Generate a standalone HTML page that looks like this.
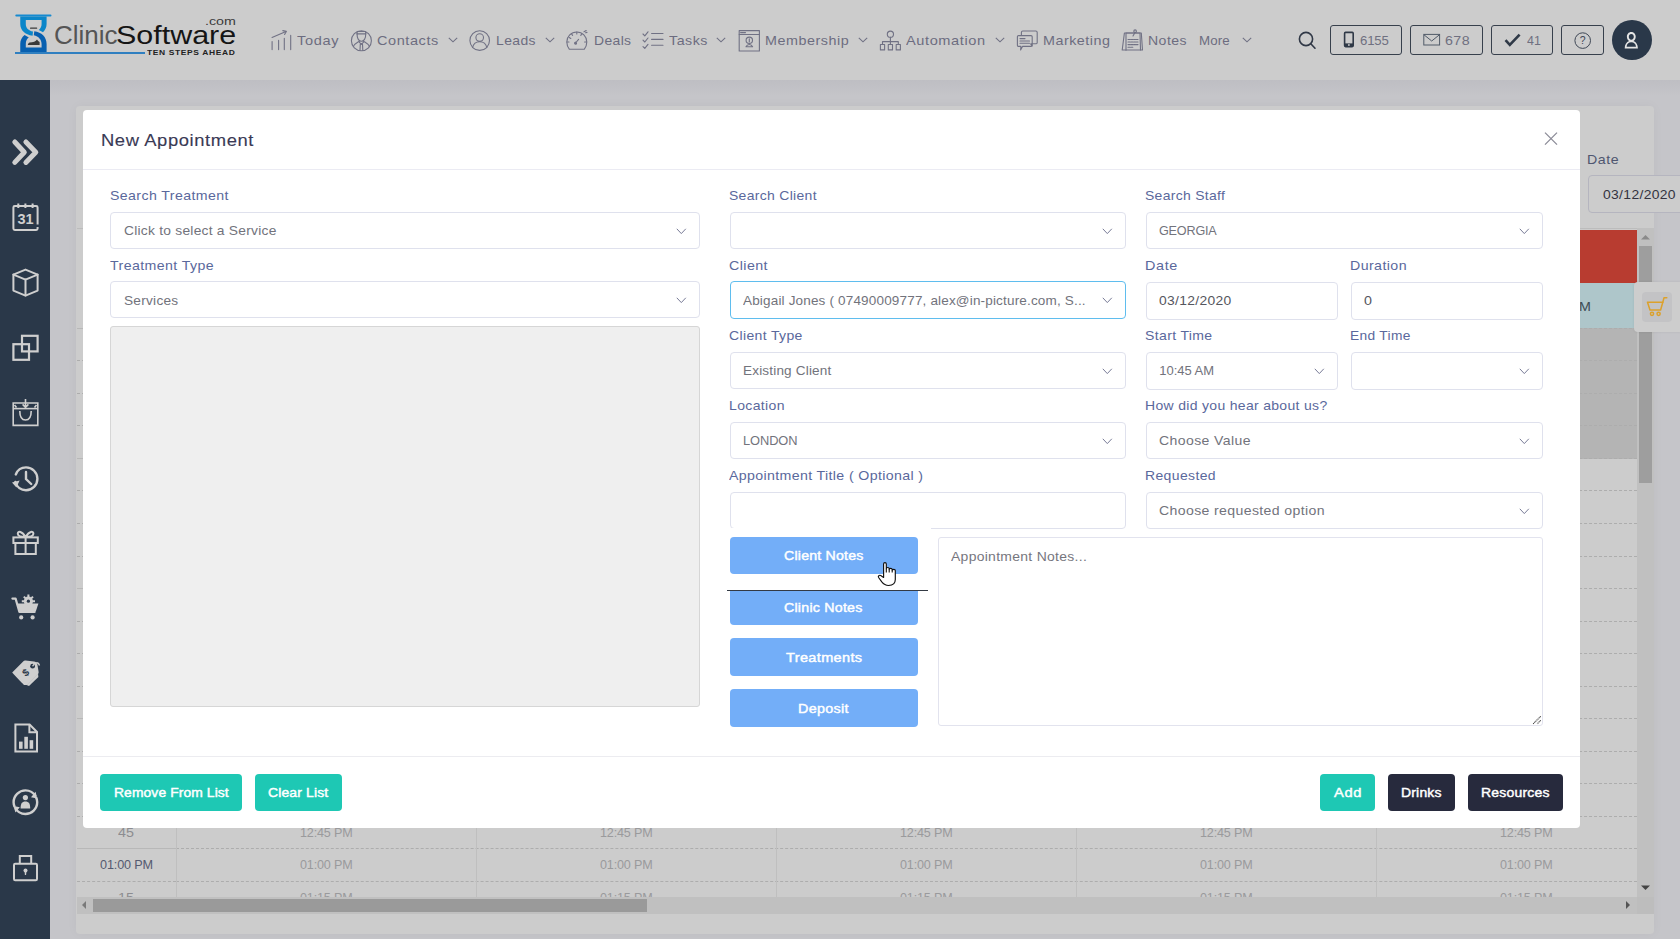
<!DOCTYPE html>
<html><head><meta charset="utf-8">
<style>
*{box-sizing:border-box;margin:0;padding:0}
html,body{width:1680px;height:939px;overflow:hidden;background:#c5c5c9;font-family:"Liberation Sans",sans-serif;position:relative}
.a{position:absolute}
.tx{white-space:pre}
svg{overflow:visible}
</style></head><body>
<div class="a" style="left:0;top:0;width:1680px;height:80px;background:#cccccc"></div>
<div class="a" style="left:0;top:80px;width:50px;height:859px;background:#2a3849"></div>
<div class="a" style="left:50px;top:80px;width:1630px;height:16px;background:linear-gradient(#bebec3,#c5c5c9)"></div>
<div class="a" style="left:76px;top:106px;width:1578px;height:828px;background:#cccccc;border-radius:4px;box-shadow:0 0 12px rgba(0,0,0,.035)"></div>
<svg class="a" style="left:0px;top:0px;" width="60" height="60" viewBox="0 0 60 60">
<rect x="15.3" y="14.6" width="36.2" height="2" rx="1" fill="#168ad0"/>
<path d="M20.25 16.6 L46.6 16.6 L46.6 24 C46.6 27.5 45.2 30 43 32.3 L38.8 30 C40.6 28.4 41.6 26.4 41.6 24 L41.6 19.9 L25.8 19.9 L25.8 24 C25.8 28 28.5 30.6 33 31.6 L32.6 35.7 C25 34.6 20.25 30.2 20.25 24 Z" fill="#0b86c9"/>
<path d="M20.25 52.3 L46.6 52.3 L46.6 44 C46.6 37 41.5 32.2 34.3 31.3 L33.8 35.3 C38.6 36.3 41.6 39.8 41.6 44 L41.6 47.6 L25.8 47.6 L25.8 44 C25.8 41 27 38.8 28.8 37.6 L24.6 35.1 C21.8 37.4 20.25 40.4 20.25 44 Z" fill="#0860b0"/>
<rect x="30" y="27.4" width="7.2" height="1.4" rx=".6" fill="#3a3a3a"/>
<path d="M27.8 45 L39.6 45 L39.6 42 C38.5 41.5 37.6 40.6 37 39.4 C36 41.5 33 42.3 29.5 42.6 C28.6 43 28 43.8 27.8 45 Z" fill="#3a3a3a"/>
</svg>
<div class="a" style="left:15px;top:52px;width:130px;height:1.8px;background:#2f7fc0"></div>
<div id="t1" class="a tx" style="left:53.94px;top:21.74px;font-size:26.00px;line-height:26.00px;color:#555555;font-weight:normal;letter-spacing:0.000px;">Clinic</div>
<div id="t2" class="a tx" style="left:116.17px;top:21.74px;font-size:26.00px;line-height:26.00px;color:#151515;font-weight:normal;letter-spacing:0.000px;transform:scaleX(1.1707);transform-origin:0 0;">Software</div>
<div id="t3" class="a tx" style="left:204.65px;top:16.19px;font-size:11.00px;line-height:11.00px;color:#3a3a3a;font-weight:normal;letter-spacing:0.000px;transform:scaleX(1.2926);transform-origin:0 0;">.com</div>
<div id="t4" class="a tx" style="left:147.49px;top:49.07px;font-size:7.00px;line-height:7.00px;color:#222;font-weight:bold;letter-spacing:0.530px;transform:scaleX(1.2048);transform-origin:0 0;">TEN STEPS AHEAD</div>
<div id="t5" class="a tx" style="left:297.13px;top:33.60px;font-size:13.00px;line-height:13.00px;color:#6c6c80;font-weight:normal;letter-spacing:0.613px;transform:scaleX(1.1186);transform-origin:0 0;">Today</div>
<div id="t6" class="a tx" style="left:376.73px;top:33.60px;font-size:13.00px;line-height:13.00px;color:#6c6c80;font-weight:normal;letter-spacing:0.509px;transform:scaleX(1.1163);transform-origin:0 0;">Contacts</div>
<div id="t7" class="a tx" style="left:495.67px;top:33.60px;font-size:13.00px;line-height:13.00px;color:#6c6c80;font-weight:normal;letter-spacing:0.387px;transform:scaleX(1.0701);transform-origin:0 0;">Leads</div>
<div id="t8" class="a tx" style="left:593.67px;top:33.60px;font-size:13.00px;line-height:13.00px;color:#6c6c80;font-weight:normal;letter-spacing:0.356px;transform:scaleX(1.0688);transform-origin:0 0;">Deals</div>
<div id="t9" class="a tx" style="left:668.65px;top:33.60px;font-size:13.00px;line-height:13.00px;color:#6c6c80;font-weight:normal;letter-spacing:0.478px;transform:scaleX(1.0943);transform-origin:0 0;">Tasks</div>
<div id="t10" class="a tx" style="left:764.64px;top:33.60px;font-size:13.00px;line-height:13.00px;color:#6c6c80;font-weight:normal;letter-spacing:0.493px;transform:scaleX(1.1026);transform-origin:0 0;">Membership</div>
<div id="t11" class="a tx" style="left:905.93px;top:33.60px;font-size:13.00px;line-height:13.00px;color:#6c6c80;font-weight:normal;letter-spacing:0.527px;transform:scaleX(1.1213);transform-origin:0 0;">Automation</div>
<div id="t12" class="a tx" style="left:1043.14px;top:33.60px;font-size:13.00px;line-height:13.00px;color:#6c6c80;font-weight:normal;letter-spacing:0.448px;transform:scaleX(1.1039);transform-origin:0 0;">Marketing</div>
<div id="t13" class="a tx" style="left:1148.16px;top:33.60px;font-size:13.00px;line-height:13.00px;color:#6c6c80;font-weight:normal;letter-spacing:0.425px;transform:scaleX(1.0811);transform-origin:0 0;">Notes</div>
<div id="t14" class="a tx" style="left:1198.60px;top:33.60px;font-size:13.00px;line-height:13.00px;color:#6c6c80;font-weight:normal;letter-spacing:0.148px;transform:scaleX(1.0230);transform-origin:0 0;">More</div>
<svg class="a" style="left:447.5px;top:37px;" width="10" height="6" viewBox="0 0 10 6"><path d="M.8 .8 L5 4.8 L9.2 .8" fill="none" stroke="#707184" stroke-width="1.1"/></svg>
<svg class="a" style="left:544.5px;top:37px;" width="10" height="6" viewBox="0 0 10 6"><path d="M.8 .8 L5 4.8 L9.2 .8" fill="none" stroke="#707184" stroke-width="1.1"/></svg>
<svg class="a" style="left:716.2px;top:37px;" width="10" height="6" viewBox="0 0 10 6"><path d="M.8 .8 L5 4.8 L9.2 .8" fill="none" stroke="#707184" stroke-width="1.1"/></svg>
<svg class="a" style="left:857.5px;top:37px;" width="10" height="6" viewBox="0 0 10 6"><path d="M.8 .8 L5 4.8 L9.2 .8" fill="none" stroke="#707184" stroke-width="1.1"/></svg>
<svg class="a" style="left:994.5px;top:37px;" width="10" height="6" viewBox="0 0 10 6"><path d="M.8 .8 L5 4.8 L9.2 .8" fill="none" stroke="#707184" stroke-width="1.1"/></svg>
<svg class="a" style="left:1241.8px;top:37px;" width="10" height="6" viewBox="0 0 10 6"><path d="M.8 .8 L5 4.8 L9.2 .8" fill="none" stroke="#707184" stroke-width="1.1"/></svg>
<svg class="a" style="left:268px;top:28px;" width="26" height="24" viewBox="0 0 26 24"><g fill="none" stroke="#707184" stroke-width="1.1" stroke-linecap="round" stroke-linejoin="round"><path d="M4.1 13.5 V21.6 M10.6 12.4 V21.6 M16.3 10.2 V21.6 M22.7 7.4 V21.6"/><path d="M4 9.4 L18 3.6"/><path d="M14.8 2.6 L18.3 3.4 L16.6 6.4"/></g></svg>
<svg class="a" style="left:350px;top:29px;" width="24" height="24" viewBox="0 0 24 24"><g fill="none" stroke="#707184" stroke-width="1.1" stroke-linecap="round" stroke-linejoin="round"><circle cx="11.4" cy="11.7" r="10"/><path d="M7.3 2.5 H15.5 L15.9 4.9 H6.9 Z"/><path d="M7.1 4.9 C6.9 9.6 9 12.3 11.4 12.3 C13.8 12.3 15.9 9.6 15.7 4.9"/><path d="M9.6 12 C7.6 13.4 4.6 14.2 3.4 17.6 M13.2 12 C15.2 13.4 18.2 14.2 19.4 17.6"/><path d="M9.4 13.4 L11.4 15.1 L13.4 13.4"/><path d="M10.3 15.1 H12.5 L12.8 21.2 M10.3 15.1 L10 21.2"/></g></svg>
<svg class="a" style="left:469px;top:29px;" width="24" height="24" viewBox="0 0 24 24"><g fill="none" stroke="#707184" stroke-width="1.1" stroke-linecap="round" stroke-linejoin="round"><circle cx="10.7" cy="11.6" r="9.8"/><circle cx="10.7" cy="8.6" r="3.8"/><path d="M3.6 18.5 C4.5 14.5 7.5 12.8 10.7 12.8 C13.9 12.8 16.9 14.5 17.8 18.5"/></g></svg>
<svg class="a" style="left:566px;top:29px;" width="24" height="24" viewBox="0 0 24 24"><g fill="none" stroke="#707184" stroke-width="1.1" stroke-linecap="round" stroke-linejoin="round"><path d="M3.4 20.3 H18.2 C20.2 17.8 20.8 15.3 20.8 13 C20.8 7.5 16.4 3 10.8 3 C5.2 3 .8 7.5 .8 13 C.8 15.3 1.4 17.8 3.4 20.3 Z"/><path d="M10.8 3 V5 M3.2 8.5 L4.8 9.4 M1.2 13 H3 M18.6 13 H20.4 M5.6 5 L6.6 6.4 M15.5 5.2 L14.8 6.4"/><path d="M9.5 14 L12.6 10.3 M10.3 13.5 a1 1 0 1 1 -.1 -.1"/><path d="M18 2.8 L20.2 1.5 M19.6 3.8 L21 3.4"/></g></svg>
<svg class="a" style="left:641px;top:29px;" width="26" height="24" viewBox="0 0 26 24"><g fill="none" stroke="#707184" stroke-width="1.1" stroke-linecap="round" stroke-linejoin="round"><path d="M2 5 L3.8 6.8 L7 2.8 M2 11.2 L3.8 13 L7 9 M2 17.6 L3.8 19.4 L7 15.4"/><path d="M10.6 4.5 H22 M10.6 10.4 H22 M10.6 16.2 H22"/></g></svg>
<svg class="a" style="left:738px;top:29px;" width="24" height="24" viewBox="0 0 24 24"><g fill="none" stroke="#707184" stroke-width="1.1" stroke-linecap="round" stroke-linejoin="round"><rect x="1.2" y="1.6" width="20.2" height="20.4"/><path d="M1.2 5.5 H21.4"/><path d="M2.6 3.6 H7.5" stroke-dasharray="1 .6"/><circle cx="11.3" cy="11.3" r="3.2"/><path d="M11.3 9.8 V13 M8 17.8 C8.6 16.4 9.8 15.5 11.3 15.5 C12.8 15.5 14 16.4 14.6 17.8 Z"/></g></svg>
<svg class="a" style="left:879px;top:29px;" width="24" height="24" viewBox="0 0 24 24"><g fill="none" stroke="#707184" stroke-width="1.1" stroke-linecap="round" stroke-linejoin="round"><circle cx="11.4" cy="5.2" r="3.1"/><path d="M11.4 8.3 V12.6 M3.5 12.6 H19.3 M3.5 12.6 V15.5 M11.4 12.6 V15.5 M19.3 12.6 V15.5"/><rect x="1.4" y="15.5" width="4.2" height="5.4"/><rect x="9.3" y="15.5" width="4.2" height="5.4"/><rect x="17.2" y="15.5" width="4.2" height="5.4"/></g></svg>
<svg class="a" style="left:1016px;top:29px;" width="24" height="24" viewBox="0 0 24 24"><g fill="none" stroke="#707184" stroke-width="1.1" stroke-linecap="round" stroke-linejoin="round"><path d="M5.4 6.5 V3.4 C5.4 2.6 6 2 6.8 2 H19.8 C20.6 2 21.2 2.6 21.2 3.4 V13.4 C21.2 14.2 20.6 14.8 19.8 14.8 H15.3 L16 17 L14.7 14.9"/><path d="M2.6 6.6 H15 C15.7 6.6 16.2 7.1 16.2 7.8 V16.2 C16.2 16.9 15.7 17.4 15 17.4 H6.5 L4.6 21 L4.9 17.4 H2.6 C1.9 17.4 1.4 16.9 1.4 16.2 V7.8 C1.4 7.1 1.9 6.6 2.6 6.6 Z"/><path d="M4 9.6 H9 M4 12 H13.5 M4 14.2 H13.5"/></g></svg>
<svg class="a" style="left:1121px;top:29px;" width="24" height="24" viewBox="0 0 24 24"><g fill="none" stroke="#707184" stroke-width="1.1" stroke-linecap="round" stroke-linejoin="round"><path d="M1.2 21 L3.4 4 H20.3 L21.5 21 Z"/><path d="M5 21.3 V4 L19 4 L19.5 21"/><circle cx="14.1" cy="2.2" r="1.3"/><path d="M14 3.4 L12 7"/><path d="M7 10.5 H17 M7 13 H17 M7 15.6 H17 M7 18.3 H12" stroke-dasharray="2 .8"/></g></svg>
<svg class="a" style="left:1296px;top:29px;" width="24" height="22" viewBox="0 0 24 22"><g fill="none" stroke="#303846" stroke-width="1.6"><circle cx="10" cy="10" r="6.6"/><path d="M14.8 14.8 L19 19.2" stroke-linecap="round"/></g></svg>
<div class="a" style="left:1330.0px;top:25px;width:72.0px;height:29.5px;border:1px solid #37404c;border-radius:3px"></div>
<div class="a" style="left:1410.0px;top:25px;width:72.5px;height:29.5px;border:1px solid #37404c;border-radius:3px"></div>
<div class="a" style="left:1491.0px;top:25px;width:61.5px;height:29.5px;border:1px solid #37404c;border-radius:3px"></div>
<div class="a" style="left:1561.0px;top:25px;width:43.0px;height:29.5px;border:1px solid #37404c;border-radius:3px"></div>
<svg class="a" style="left:1342px;top:31px;" width="14" height="18" viewBox="0 0 14 18"><rect x="2.6" y="1.4" width="8.6" height="14.2" rx="1" fill="none" stroke="#2f3947" stroke-width="1.6"/><rect x="2.6" y="12.4" width="8.6" height="3.2" fill="#2f3947"/><circle cx="6.9" cy="14" r=".9" fill="#ccc"/></svg>
<svg class="a" style="left:1422px;top:33px;" width="20" height="14" viewBox="0 0 20 14"><rect x="1.8" y="1.4" width="15.8" height="10.6" fill="none" stroke="#505a68" stroke-width="1"/><path d="M2 1.8 L9.7 8 L17.4 1.8" fill="none" stroke="#505a68" stroke-width="1"/></svg>
<svg class="a" style="left:1503px;top:32px;" width="20" height="16" viewBox="0 0 20 16"><path d="M2.5 8.2 L6.8 12.8 L16.6 2.6" fill="none" stroke="#2f3947" stroke-width="2.6"/></svg>
<svg class="a" style="left:1572px;top:31px;" width="20" height="20" viewBox="0 0 20 20"><circle cx="10.7" cy="9.6" r="7.8" fill="none" stroke="#3e4755" stroke-width="1"/><text x="10.7" y="13.4" font-family="Liberation Sans" font-size="10.5" fill="#3e4755" text-anchor="middle">?</text></svg>
<div class="a" style="left:1612px;top:20px;width:39.5px;height:40px;border-radius:50%;background:#2a3849"></div>
<svg class="a" style="left:1622px;top:30px;" width="20" height="22" viewBox="0 0 20 22"><path d="M9.3 2 C6.5 2 4.9 4.3 4.9 6.8 C4.9 8.6 5.7 10.2 7.1 11 C4.4 12 2.7 14.6 2.7 18.5 H15.9 C15.9 14.6 14.2 12 11.5 11 C12.9 10.2 13.7 8.6 13.7 6.8 C13.7 4.3 12.1 2 9.3 2 Z" fill="#e5e5e5"/><path d="M9.3 3.9 C7.7 3.9 6.8 5.2 6.8 6.8 C6.8 8.4 7.7 9.8 9.3 9.8 C10.9 9.8 11.8 8.4 11.8 6.8 C11.8 5.2 10.9 3.9 9.3 3.9 Z M4.6 16.7 C4.8 13.8 6.6 12.2 9.3 12.2 C12 12.2 13.8 13.8 14 16.7 Z" fill="#2a3849"/></svg>
<div id="t15" class="a tx" style="left:1359.96px;top:34.07px;font-size:13.50px;line-height:13.50px;color:#6f7080;font-weight:normal;letter-spacing:-0.161px;transform:scaleX(0.9765);transform-origin:0 0;">6155</div>
<div id="t16" class="a tx" style="left:1445.14px;top:34.07px;font-size:13.50px;line-height:13.50px;color:#6f7080;font-weight:normal;letter-spacing:0.396px;transform:scaleX(1.0556);transform-origin:0 0;">678</div>
<div id="t17" class="a tx" style="left:1527.25px;top:34.07px;font-size:13.50px;line-height:13.50px;color:#6f7080;font-weight:normal;letter-spacing:0.000px;transform:scaleX(0.9200);transform-origin:0 0;">41</div>
<svg class="a" style="left:10px;top:137px;" width="32" height="30" viewBox="0 0 32 30"><g fill="none" stroke="#cfcfcf" stroke-width="5" stroke-linecap="round" stroke-linejoin="round"><path d="M4.8 5 L14.3 15.2 L4.8 25.4"/><path d="M15.9 5 L25.8 15.2 L15.9 25.4"/></g></svg>
<svg class="a" style="left:10px;top:202px;" width="32" height="32" viewBox="0 0 32 32"><g fill="none" stroke="#cfcfcf" stroke-width="2"><path d="M27.6 22.5 V5.4 C27.6 4.6 27 4 26.2 4 H4.8 C4 4 3.4 4.6 3.4 5.4 V26.6 C3.4 27.4 4 28 4.8 28 H26.2 C27 28 27.6 27.4 27.6 26.6 V25"/><path d="M8.3 1.6 V6 M15.4 1.6 V6 M22.6 1.6 V6"/></g><text x="15.6" y="22.4" font-family="Liberation Sans" font-weight="bold" font-size="14.5" fill="#cfcfcf" text-anchor="middle">31</text></svg>
<svg class="a" style="left:10px;top:267px;" width="32" height="32" viewBox="0 0 32 32"><g fill="none" stroke="#cfcfcf" stroke-width="2" stroke-linecap="round" stroke-linejoin="round"><path d="M15.5 2.6 L27.6 7.6 V23.6 L15.5 28.6 L3.4 23.6 V7.6 Z"/><path d="M3.4 7.6 L15.5 12.6 L27.6 7.6 M15.5 12.6 V28.6"/></g></svg>
<svg class="a" style="left:10px;top:332px;" width="32" height="32" viewBox="0 0 32 32"><g fill="none" stroke="#cfcfcf" stroke-width="2.2"><rect x="3.4" y="12.2" width="15.6" height="15.6"/><rect x="12" y="3.8" width="15.6" height="15.6"/></g></svg>
<svg class="a" style="left:10px;top:397px;" width="32" height="32" viewBox="0 0 32 32"><g fill="none" stroke="#cfcfcf" stroke-width="1.6"><path d="M3.2 6 H27.8 V28.4 H3.2 Z"/><path d="M3.2 11.6 H27.8"/><path d="M15.5 2 V10.4 M12.6 7.4 L15.5 10.4 L18.4 7.4"/><path d="M9.8 14 C9.8 21 11.8 23 15.5 23 C19.2 23 21.2 21 21.2 14"/><path d="M4.5 8 L6.5 10.6 M26.5 8 L24.5 10.6"/></g></svg>
<svg class="a" style="left:10px;top:462px;" width="32" height="32" viewBox="0 0 32 32"><g fill="none" stroke="#cfcfcf" stroke-width="2.4" stroke-linecap="round"><path d="M5.4 20 C6.8 25 11 28.2 16 28.2 C22.3 28.2 27.4 23.1 27.4 16.8 C27.4 10.5 22.3 5.4 16 5.4 C11.2 5.4 7.4 8.3 5.8 12.5"/><path d="M16 10 V17 L21.2 22"/></g><path d="M2 20.5 L9.6 18.4 L6.4 25.6 Z" fill="#cfcfcf"/></svg>
<svg class="a" style="left:10px;top:527px;" width="32" height="32" viewBox="0 0 32 32"><g fill="none" stroke="#cfcfcf" stroke-width="2"><rect x="3.4" y="10.4" width="24.4" height="5.6"/><path d="M5.4 16 V27 H25.8 V16"/><path d="M15.6 10.4 V27"/><path d="M15.6 10 C12 4 7.8 3.6 7.8 6.8 C7.8 9 12 10 15.6 10 C19.2 10 23.4 9 23.4 6.8 C23.4 3.6 19.2 4 15.6 10"/></g></svg>
<svg class="a" style="left:10px;top:592px;" width="32" height="32" viewBox="0 0 32 32"><g fill="none" stroke="#cfcfcf" stroke-width="2.2" stroke-linecap="round" stroke-linejoin="round"><path d="M2.4 6.6 H5.6 L9.4 20 H24.6"/></g><path d="M7 11.4 H28.4 L25.8 19.4 H9.2 Z" fill="#cfcfcf"/><circle cx="11.2" cy="25.4" r="2.1" fill="#cfcfcf"/><circle cx="22.6" cy="25.4" r="2.1" fill="#cfcfcf"/><circle cx="18.4" cy="9.2" r="4.6" fill="#cfcfcf"/><g stroke="#cfcfcf" stroke-width="2"><path d="M18.4 2.6 V15.8 M11.8 9.2 H25 M13.8 4.6 L23 13.8 M23 4.6 L13.8 13.8"/></g><circle cx="18.4" cy="9.2" r="1.6" fill="#2a3849"/></svg>
<svg class="a" style="left:10px;top:657px;" width="32" height="32" viewBox="0 0 32 32"><path d="M2.2 15.4 L13.4 4.2 C14 3.6 14.8 3.4 15.6 3.6 L24 4.6 C25.6 4.8 27 6 27.4 7.6 L28.6 14.8 C28.8 15.6 28.6 16.4 28 17 L17 28 L14 28 Z" fill="#cfcfcf"/><path d="M2.2 15.4 L11.8 25.4 L17 28" fill="#cfcfcf"/><circle cx="22.6" cy="9.2" r="2.4" fill="#2a3849"/><path d="M22.6 9.2 C25 4.5 28.4 5 29.5 8.5" fill="none" stroke="#cfcfcf" stroke-width="1.3"/><text x="13.2" y="21" font-family="Liberation Sans" font-weight="bold" font-size="10" fill="#2a3849" transform="rotate(-40 13.2 17)">$</text><path d="M16.5 28 L28 16.6 L28.4 20 L19 29 Z" fill="#cfcfcf"/></svg>
<svg class="a" style="left:10px;top:722px;" width="32" height="32" viewBox="0 0 32 32"><g fill="none" stroke="#cfcfcf" stroke-width="2"><path d="M5.4 2.6 H19.6 L27 10 V29.4 H5.4 Z"/><path d="M19.4 2.6 V10.2 H27"/></g><rect x="9" y="19.6" width="3.6" height="7.2" fill="#cfcfcf"/><rect x="14.3" y="14.8" width="3.6" height="12" fill="#cfcfcf"/><rect x="19.6" y="18.2" width="3.6" height="8.6" fill="#cfcfcf"/></svg>
<svg class="a" style="left:10px;top:787px;" width="32" height="32" viewBox="0 0 32 32"><g fill="none" stroke="#cfcfcf" stroke-width="2.4"><path d="M25.6 9.4 C23.6 5.8 19.8 3.4 15.4 3.4 C9 3.4 3.6 8.7 3.6 15.2 C3.6 17 4 18.6 4.7 20"/><path d="M5.2 21 C7.2 24.6 11 27 15.4 27 C21.8 27 27.2 21.7 27.2 15.2 C27.2 13.4 26.8 11.8 26.1 10.4"/></g><path d="M25.6 4.8 L27.2 11.4 L21 10.2 Z M5.4 25.6 L3.6 19 L9.8 20.2 Z" fill="#cfcfcf"/><circle cx="15.4" cy="10.6" r="2.6" fill="#cfcfcf"/><path d="M10.6 21.4 C10.6 16.6 12 14.6 15.4 14.6 C18.8 14.6 20.2 16.6 20.2 21.4 Z" fill="#cfcfcf"/></svg>
<svg class="a" style="left:10px;top:852px;" width="32" height="32" viewBox="0 0 32 32"><g fill="none" stroke="#cfcfcf" stroke-width="2"><rect x="4" y="11.8" width="23" height="16.4" rx="1.2"/><path d="M9.8 11.8 V4 H21.2 V11.8"/></g><circle cx="15.5" cy="18.4" r="2" fill="#cfcfcf"/><path d="M14.6 19 L16.4 19 L16.1 23 L14.9 23 Z" fill="#cfcfcf"/></svg>
<div id="t18" class="a tx" style="left:1587.15px;top:152.80px;font-size:13.00px;line-height:13.00px;color:#4f5670;font-weight:normal;letter-spacing:0.501px;transform:scaleX(1.0894);transform-origin:0 0;">Date</div>
<div class="a" style="left:1588px;top:175px;width:110px;height:38px;border:1px solid #b5b5bf;border-radius:4px;background:#cccccc"></div>
<div id="t19" class="a tx" style="left:1603.17px;top:188.30px;font-size:13.00px;line-height:13.00px;color:#333340;font-weight:normal;letter-spacing:0.311px;transform:scaleX(1.0690);transform-origin:0 0;">03/12/2020</div>
<div class="a" style="left:77px;top:228px;width:1560px;height:669px;background:#cccccc;overflow:hidden"></div>
<div class="a" style="left:1580px;top:328px;width:57px;height:130.5px;background:#b4b4b4"></div>
<div class="a" style="left:77px;top:327.7px;width:99px;height:1px;background:#b8b8b8"></div>
<div class="a" style="left:176px;top:327.7px;width:1461px;height:1px;border-top:1px dashed #adadad"></div>
<div class="a" style="left:77px;top:360.2px;width:99px;height:1px;border-top:1px dashed #adadad"></div>
<div class="a" style="left:176px;top:360.2px;width:1461px;height:1px;border-top:1px dashed #adadad"></div>
<div class="a" style="left:77px;top:392.8px;width:99px;height:1px;border-top:1px dashed #adadad"></div>
<div class="a" style="left:176px;top:392.8px;width:1461px;height:1px;border-top:1px dashed #adadad"></div>
<div class="a" style="left:77px;top:425.3px;width:99px;height:1px;border-top:1px dashed #adadad"></div>
<div class="a" style="left:176px;top:425.3px;width:1461px;height:1px;border-top:1px dashed #adadad"></div>
<div class="a" style="left:77px;top:457.9px;width:99px;height:1px;background:#b8b8b8"></div>
<div class="a" style="left:176px;top:457.9px;width:1461px;height:1px;border-top:1px dashed #adadad"></div>
<div class="a" style="left:77px;top:490.4px;width:99px;height:1px;border-top:1px dashed #adadad"></div>
<div class="a" style="left:176px;top:490.4px;width:1461px;height:1px;border-top:1px dashed #adadad"></div>
<div class="a" style="left:77px;top:522.9px;width:99px;height:1px;border-top:1px dashed #adadad"></div>
<div class="a" style="left:176px;top:522.9px;width:1461px;height:1px;border-top:1px dashed #adadad"></div>
<div class="a" style="left:77px;top:555.5px;width:99px;height:1px;border-top:1px dashed #adadad"></div>
<div class="a" style="left:176px;top:555.5px;width:1461px;height:1px;border-top:1px dashed #adadad"></div>
<div class="a" style="left:77px;top:588.0px;width:99px;height:1px;background:#b8b8b8"></div>
<div class="a" style="left:176px;top:588.0px;width:1461px;height:1px;border-top:1px dashed #adadad"></div>
<div class="a" style="left:77px;top:620.6px;width:99px;height:1px;border-top:1px dashed #adadad"></div>
<div class="a" style="left:176px;top:620.6px;width:1461px;height:1px;border-top:1px dashed #adadad"></div>
<div class="a" style="left:77px;top:653.1px;width:99px;height:1px;border-top:1px dashed #adadad"></div>
<div class="a" style="left:176px;top:653.1px;width:1461px;height:1px;border-top:1px dashed #adadad"></div>
<div class="a" style="left:77px;top:685.6px;width:99px;height:1px;border-top:1px dashed #adadad"></div>
<div class="a" style="left:176px;top:685.6px;width:1461px;height:1px;border-top:1px dashed #adadad"></div>
<div class="a" style="left:77px;top:718.2px;width:99px;height:1px;background:#b8b8b8"></div>
<div class="a" style="left:176px;top:718.2px;width:1461px;height:1px;border-top:1px dashed #adadad"></div>
<div class="a" style="left:77px;top:750.7px;width:99px;height:1px;border-top:1px dashed #adadad"></div>
<div class="a" style="left:176px;top:750.7px;width:1461px;height:1px;border-top:1px dashed #adadad"></div>
<div class="a" style="left:77px;top:783.3px;width:99px;height:1px;border-top:1px dashed #adadad"></div>
<div class="a" style="left:176px;top:783.3px;width:1461px;height:1px;border-top:1px dashed #adadad"></div>
<div class="a" style="left:77px;top:815.8px;width:99px;height:1px;border-top:1px dashed #adadad"></div>
<div class="a" style="left:176px;top:815.8px;width:1461px;height:1px;border-top:1px dashed #adadad"></div>
<div class="a" style="left:77px;top:848.3px;width:99px;height:1px;background:#b8b8b8"></div>
<div class="a" style="left:176px;top:848.3px;width:1461px;height:1px;border-top:1px dashed #adadad"></div>
<div class="a" style="left:77px;top:880.9px;width:99px;height:1px;border-top:1px dashed #adadad"></div>
<div class="a" style="left:176px;top:880.9px;width:1461px;height:1px;border-top:1px dashed #adadad"></div>
<div class="a" style="left:77px;top:228px;width:1560px;height:1px;background:#bcbcbc"></div>
<div class="a" style="left:176px;top:228px;width:1px;height:669px;background:#bfbfbf"></div>
<div class="a" style="left:476px;top:228px;width:1px;height:669px;background:#bfbfbf"></div>
<div class="a" style="left:776px;top:228px;width:1px;height:669px;background:#bfbfbf"></div>
<div class="a" style="left:1076px;top:228px;width:1px;height:669px;background:#bfbfbf"></div>
<div class="a" style="left:1376px;top:228px;width:1px;height:669px;background:#bfbfbf"></div>
<div class="a" style="left:1580px;top:230px;width:57px;height:53px;background:#b83c30"></div>
<div class="a" style="left:1580px;top:283px;width:57px;height:45px;background:#aec6ca"></div>
<div id="t20" class="a tx" style="left:1579.14px;top:300.00px;font-size:13.00px;line-height:13.00px;color:#3d4d55;font-weight:normal;letter-spacing:0.000px;transform:scaleX(1.1000);transform-origin:0 0;">M</div>
<div id="t21" class="a tx" style="left:118.14px;top:825.70px;font-size:13.00px;line-height:13.00px;color:#8c8c90;font-weight:normal;letter-spacing:0.000px;transform:scaleX(1.1000);transform-origin:0 0;">45</div>
<div id="t22" class="a tx" style="left:100.24px;top:858.10px;font-size:13.00px;line-height:13.00px;color:#555a70;font-weight:normal;letter-spacing:-0.147px;transform:scaleX(0.9731);transform-origin:0 0;">01:00 PM</div>
<div id="t23" class="a tx" style="left:118.14px;top:890.80px;font-size:13.00px;line-height:13.00px;color:#8c8c90;font-weight:normal;letter-spacing:0.000px;transform:scaleX(1.1000);transform-origin:0 0;">15</div>
<div id="t24" class="a tx" style="left:299.64px;top:825.70px;font-size:13.00px;line-height:13.00px;color:#9a9a9c;font-weight:normal;letter-spacing:-0.171px;transform:scaleX(0.9688);transform-origin:0 0;">12:45 PM</div>
<div id="t25" class="a tx" style="left:299.64px;top:858.10px;font-size:13.00px;line-height:13.00px;color:#9a9a9c;font-weight:normal;letter-spacing:-0.171px;transform:scaleX(0.9688);transform-origin:0 0;">01:00 PM</div>
<div id="t26" class="a tx" style="left:299.64px;top:890.80px;font-size:13.00px;line-height:13.00px;color:#9a9a9c;font-weight:normal;letter-spacing:-0.171px;transform:scaleX(0.9688);transform-origin:0 0;">01:15 PM</div>
<div id="t27" class="a tx" style="left:599.64px;top:825.70px;font-size:13.00px;line-height:13.00px;color:#9a9a9c;font-weight:normal;letter-spacing:-0.171px;transform:scaleX(0.9688);transform-origin:0 0;">12:45 PM</div>
<div id="t28" class="a tx" style="left:599.64px;top:858.10px;font-size:13.00px;line-height:13.00px;color:#9a9a9c;font-weight:normal;letter-spacing:-0.171px;transform:scaleX(0.9688);transform-origin:0 0;">01:00 PM</div>
<div id="t29" class="a tx" style="left:599.64px;top:890.80px;font-size:13.00px;line-height:13.00px;color:#9a9a9c;font-weight:normal;letter-spacing:-0.171px;transform:scaleX(0.9688);transform-origin:0 0;">01:15 PM</div>
<div id="t30" class="a tx" style="left:899.64px;top:825.70px;font-size:13.00px;line-height:13.00px;color:#9a9a9c;font-weight:normal;letter-spacing:-0.171px;transform:scaleX(0.9688);transform-origin:0 0;">12:45 PM</div>
<div id="t31" class="a tx" style="left:899.64px;top:858.10px;font-size:13.00px;line-height:13.00px;color:#9a9a9c;font-weight:normal;letter-spacing:-0.171px;transform:scaleX(0.9688);transform-origin:0 0;">01:00 PM</div>
<div id="t32" class="a tx" style="left:899.64px;top:890.80px;font-size:13.00px;line-height:13.00px;color:#9a9a9c;font-weight:normal;letter-spacing:-0.171px;transform:scaleX(0.9688);transform-origin:0 0;">01:15 PM</div>
<div id="t33" class="a tx" style="left:1199.64px;top:825.70px;font-size:13.00px;line-height:13.00px;color:#9a9a9c;font-weight:normal;letter-spacing:-0.171px;transform:scaleX(0.9688);transform-origin:0 0;">12:45 PM</div>
<div id="t34" class="a tx" style="left:1199.64px;top:858.10px;font-size:13.00px;line-height:13.00px;color:#9a9a9c;font-weight:normal;letter-spacing:-0.171px;transform:scaleX(0.9688);transform-origin:0 0;">01:00 PM</div>
<div id="t35" class="a tx" style="left:1199.64px;top:890.80px;font-size:13.00px;line-height:13.00px;color:#9a9a9c;font-weight:normal;letter-spacing:-0.171px;transform:scaleX(0.9688);transform-origin:0 0;">01:15 PM</div>
<div id="t36" class="a tx" style="left:1499.64px;top:825.70px;font-size:13.00px;line-height:13.00px;color:#9a9a9c;font-weight:normal;letter-spacing:-0.171px;transform:scaleX(0.9688);transform-origin:0 0;">12:45 PM</div>
<div id="t37" class="a tx" style="left:1499.64px;top:858.10px;font-size:13.00px;line-height:13.00px;color:#9a9a9c;font-weight:normal;letter-spacing:-0.171px;transform:scaleX(0.9688);transform-origin:0 0;">01:00 PM</div>
<div id="t38" class="a tx" style="left:1499.64px;top:890.80px;font-size:13.00px;line-height:13.00px;color:#9a9a9c;font-weight:normal;letter-spacing:-0.171px;transform:scaleX(0.9688);transform-origin:0 0;">01:15 PM</div>
<div class="a" style="left:77px;top:897px;width:1560px;height:17px;background:#c0c0c0"></div>
<div class="a" style="left:93px;top:899px;width:554px;height:13px;background:#9a9a9a"></div>
<svg class="a" style="left:80px;top:900px;" width="8" height="10" viewBox="0 0 8 10"><path d="M6 1 L2 5 L6 9 Z" fill="#7a7a7a"/></svg>
<svg class="a" style="left:1624px;top:900px;" width="8" height="10" viewBox="0 0 8 10"><path d="M2 1 L6 5 L2 9 Z" fill="#555"/></svg>
<div class="a" style="left:1637px;top:897px;width:17px;height:17px;background:#bdbdbd"></div>
<div class="a" style="left:1637px;top:228px;width:17px;height:669px;background:#c0c0c0"></div>
<div class="a" style="left:1639px;top:246px;width:13px;height:237px;background:#9e9e9e"></div>
<svg class="a" style="left:1640px;top:233px;" width="11" height="8" viewBox="0 0 11 8"><path d="M1 6.5 L5.5 2 L10 6.5 Z" fill="#8a8a8a"/></svg>
<svg class="a" style="left:1640px;top:884px;" width="11" height="8" viewBox="0 0 11 8"><path d="M1 1.5 L5.5 6 L10 1.5 Z" fill="#444"/></svg>
<div class="a" style="left:1634px;top:282px;width:50px;height:50px;background:#cdcdcd;border-radius:4px;box-shadow:0 0 3px rgba(0,0,0,.08)"></div>
<div class="a" style="left:1642px;top:292px;width:30px;height:30px;background:#c3c3c5;border-radius:4px"></div>
<svg class="a" style="left:1645px;top:295px;" width="24" height="24" viewBox="0 0 24 24"><g fill="none" stroke="#dca12c" stroke-width="1.5" stroke-linejoin="round" stroke-linecap="round"><path d="M2.5 7.2 H17.8 L15.6 15 H5 Z"/><path d="M17.8 7.2 L19 2.8 H21.8"/><circle cx="7" cy="18.8" r="1.6"/><circle cx="13.6" cy="18.8" r="1.6"/></g></svg>
<div class="a" style="left:83px;top:110px;width:1497px;height:718px;background:#fff;border-radius:4px"></div>
<div class="a" style="left:83px;top:169px;width:1497px;height:1px;background:#ebebf3"></div>
<div class="a" style="left:83px;top:756px;width:1497px;height:1px;background:#ececf0"></div>
<div id="t39" class="a tx" style="left:100.50px;top:132.58px;font-size:16.80px;line-height:16.80px;color:#3a3a55;font-weight:normal;letter-spacing:0.545px;transform:scaleX(1.0953);transform-origin:0 0;-webkit-text-stroke:.12px #3a3a55">New Appointment</div>
<svg class="a" style="left:1543px;top:131px;" width="16" height="16" viewBox="0 0 16 16"><path d="M2 1.6 L14 13.6 M14 1.6 L2 13.6" stroke="#8c8c98" stroke-width="1.3" fill="none"/></svg>
<div id="t40" class="a tx" style="left:109.75px;top:189.00px;font-size:13.00px;line-height:13.00px;color:#5a689c;font-weight:normal;letter-spacing:0.369px;transform:scaleX(1.0873);transform-origin:0 0;">Search Treatment</div>
<div id="t41" class="a tx" style="left:109.75px;top:259.00px;font-size:13.00px;line-height:13.00px;color:#5a689c;font-weight:normal;letter-spacing:0.379px;transform:scaleX(1.0892);transform-origin:0 0;">Treatment Type</div>
<div id="t42" class="a tx" style="left:729.16px;top:189.00px;font-size:13.00px;line-height:13.00px;color:#5a689c;font-weight:normal;letter-spacing:0.295px;transform:scaleX(1.0731);transform-origin:0 0;">Search Client</div>
<div id="t43" class="a tx" style="left:729.15px;top:259.00px;font-size:13.00px;line-height:13.00px;color:#5a689c;font-weight:normal;letter-spacing:0.388px;transform:scaleX(1.0958);transform-origin:0 0;">Client</div>
<div id="t44" class="a tx" style="left:729.16px;top:329.00px;font-size:13.00px;line-height:13.00px;color:#5a689c;font-weight:normal;letter-spacing:0.317px;transform:scaleX(1.0793);transform-origin:0 0;">Client Type</div>
<div id="t45" class="a tx" style="left:729.16px;top:399.00px;font-size:13.00px;line-height:13.00px;color:#5a689c;font-weight:normal;letter-spacing:0.339px;transform:scaleX(1.0782);transform-origin:0 0;">Location</div>
<div id="t46" class="a tx" style="left:728.95px;top:469.00px;font-size:13.00px;line-height:13.00px;color:#5a689c;font-weight:normal;letter-spacing:0.324px;transform:scaleX(1.0912);transform-origin:0 0;">Appointment Title ( Optional )</div>
<div id="t47" class="a tx" style="left:1145.16px;top:189.00px;font-size:13.00px;line-height:13.00px;color:#5a689c;font-weight:normal;letter-spacing:0.290px;transform:scaleX(1.0719);transform-origin:0 0;">Search Staff</div>
<div id="t48" class="a tx" style="left:1145.14px;top:259.00px;font-size:13.00px;line-height:13.00px;color:#5a689c;font-weight:normal;letter-spacing:0.589px;transform:scaleX(1.1068);transform-origin:0 0;">Date</div>
<div id="t49" class="a tx" style="left:1350.15px;top:259.00px;font-size:13.00px;line-height:13.00px;color:#5a689c;font-weight:normal;letter-spacing:0.389px;transform:scaleX(1.0906);transform-origin:0 0;">Duration</div>
<div id="t50" class="a tx" style="left:1145.16px;top:329.00px;font-size:13.00px;line-height:13.00px;color:#5a689c;font-weight:normal;letter-spacing:0.325px;transform:scaleX(1.0801);transform-origin:0 0;">Start Time</div>
<div id="t51" class="a tx" style="left:1350.17px;top:329.00px;font-size:13.00px;line-height:13.00px;color:#5a689c;font-weight:normal;letter-spacing:0.293px;transform:scaleX(1.0594);transform-origin:0 0;">End Time</div>
<div id="t52" class="a tx" style="left:1145.16px;top:399.00px;font-size:13.00px;line-height:13.00px;color:#5a689c;font-weight:normal;letter-spacing:0.302px;transform:scaleX(1.0751);transform-origin:0 0;">How did you hear about us?</div>
<div id="t53" class="a tx" style="left:1145.16px;top:469.00px;font-size:13.00px;line-height:13.00px;color:#5a689c;font-weight:normal;letter-spacing:0.357px;transform:scaleX(1.0732);transform-origin:0 0;">Requested</div>
<div class="a" style="left:110.0px;top:212.0px;width:590.0px;height:37.0px;border:1px solid #dfe1ed;border-radius:4px;background:#fff"></div>
<svg class="a" style="left:676px;top:227.5px;" width="11" height="7" viewBox="0 0 11 7"><path d="M.8 .8 L5.3 5.6 L9.8 .8" fill="none" stroke="#777a96" stroke-width="1"/></svg>
<div class="a" style="left:110.0px;top:281.0px;width:590.0px;height:37.0px;border:1px solid #dfe1ed;border-radius:4px;background:#fff"></div>
<svg class="a" style="left:676px;top:296.5px;" width="11" height="7" viewBox="0 0 11 7"><path d="M.8 .8 L5.3 5.6 L9.8 .8" fill="none" stroke="#777a96" stroke-width="1"/></svg>
<div class="a" style="left:110px;top:326px;width:590px;height:381px;background:#efefef;border:1px solid #d6d6d6;border-radius:3px"></div>
<div class="a" style="left:730.0px;top:212.0px;width:396.0px;height:37.0px;border:1px solid #dfe1ed;border-radius:4px;background:#fff"></div>
<svg class="a" style="left:1102px;top:227.5px;" width="11" height="7" viewBox="0 0 11 7"><path d="M.8 .8 L5.3 5.6 L9.8 .8" fill="none" stroke="#777a96" stroke-width="1"/></svg>
<div class="a" style="left:730.0px;top:281.0px;width:396.0px;height:38.0px;border:1px solid #5fbdee;border-radius:4px;background:#fff"></div>
<svg class="a" style="left:1102px;top:297.0px;" width="11" height="7" viewBox="0 0 11 7"><path d="M.8 .8 L5.3 5.6 L9.8 .8" fill="none" stroke="#777a96" stroke-width="1"/></svg>
<div class="a" style="left:730.0px;top:352.0px;width:396.0px;height:37.0px;border:1px solid #dfe1ed;border-radius:4px;background:#fff"></div>
<svg class="a" style="left:1102px;top:367.5px;" width="11" height="7" viewBox="0 0 11 7"><path d="M.8 .8 L5.3 5.6 L9.8 .8" fill="none" stroke="#777a96" stroke-width="1"/></svg>
<div class="a" style="left:730.0px;top:422.0px;width:396.0px;height:37.0px;border:1px solid #dfe1ed;border-radius:4px;background:#fff"></div>
<svg class="a" style="left:1102px;top:437.5px;" width="11" height="7" viewBox="0 0 11 7"><path d="M.8 .8 L5.3 5.6 L9.8 .8" fill="none" stroke="#777a96" stroke-width="1"/></svg>
<div class="a" style="left:730.0px;top:492.0px;width:396.0px;height:37.0px;border:1px solid #dfe1ed;border-radius:4px;background:#fff"></div>
<div class="a" style="left:727px;top:528px;width:204px;height:9px;background:#fff"></div>
<div class="a" style="left:1146.0px;top:212.0px;width:397.0px;height:37.0px;border:1px solid #dfe1ed;border-radius:4px;background:#fff"></div>
<svg class="a" style="left:1519px;top:227.5px;" width="11" height="7" viewBox="0 0 11 7"><path d="M.8 .8 L5.3 5.6 L9.8 .8" fill="none" stroke="#777a96" stroke-width="1"/></svg>
<div class="a" style="left:1146.0px;top:282.0px;width:192.0px;height:37.5px;border:1px solid #dfe1ed;border-radius:4px;background:#fff"></div>
<div class="a" style="left:1351.0px;top:282.0px;width:192.0px;height:37.5px;border:1px solid #dfe1ed;border-radius:4px;background:#fff"></div>
<div class="a" style="left:1146.0px;top:352.0px;width:192.0px;height:37.5px;border:1px solid #dfe1ed;border-radius:4px;background:#fff"></div>
<svg class="a" style="left:1314px;top:367.75px;" width="11" height="7" viewBox="0 0 11 7"><path d="M.8 .8 L5.3 5.6 L9.8 .8" fill="none" stroke="#777a96" stroke-width="1"/></svg>
<div class="a" style="left:1351.0px;top:352.0px;width:192.0px;height:37.5px;border:1px solid #dfe1ed;border-radius:4px;background:#fff"></div>
<svg class="a" style="left:1519px;top:367.75px;" width="11" height="7" viewBox="0 0 11 7"><path d="M.8 .8 L5.3 5.6 L9.8 .8" fill="none" stroke="#777a96" stroke-width="1"/></svg>
<div class="a" style="left:1146.0px;top:422.0px;width:397.0px;height:37.0px;border:1px solid #dfe1ed;border-radius:4px;background:#fff"></div>
<svg class="a" style="left:1519px;top:437.5px;" width="11" height="7" viewBox="0 0 11 7"><path d="M.8 .8 L5.3 5.6 L9.8 .8" fill="none" stroke="#777a96" stroke-width="1"/></svg>
<div class="a" style="left:1146.0px;top:492.0px;width:397.0px;height:37.0px;border:1px solid #dfe1ed;border-radius:4px;background:#fff"></div>
<svg class="a" style="left:1519px;top:507.5px;" width="11" height="7" viewBox="0 0 11 7"><path d="M.8 .8 L5.3 5.6 L9.8 .8" fill="none" stroke="#777a96" stroke-width="1"/></svg>
<div id="t54" class="a tx" style="left:123.57px;top:223.90px;font-size:13.00px;line-height:13.00px;color:#72737c;font-weight:normal;letter-spacing:0.225px;transform:scaleX(1.0624);transform-origin:0 0;">Click to select a Service</div>
<div id="t55" class="a tx" style="left:123.58px;top:294.00px;font-size:13.00px;line-height:13.00px;color:#72737c;font-weight:normal;letter-spacing:0.234px;transform:scaleX(1.0518);transform-origin:0 0;">Services</div>
<div id="t56" class="a tx" style="left:743.39px;top:294.20px;font-size:13.00px;line-height:13.00px;color:#72737c;font-weight:normal;letter-spacing:0.156px;transform:scaleX(1.0402);transform-origin:0 0;">Abigail Jones ( 07490009777, alex@in-picture.com, S...</div>
<div id="t57" class="a tx" style="left:743.19px;top:364.40px;font-size:13.00px;line-height:13.00px;color:#72737c;font-weight:normal;letter-spacing:0.161px;transform:scaleX(1.0429);transform-origin:0 0;">Existing Client</div>
<div id="t58" class="a tx" style="left:743.23px;top:434.40px;font-size:13.00px;line-height:13.00px;color:#72737c;font-weight:normal;letter-spacing:-0.086px;transform:scaleX(0.9885);transform-origin:0 0;">LONDON</div>
<div id="t59" class="a tx" style="left:1159.24px;top:224.30px;font-size:13.00px;line-height:13.00px;color:#72737c;font-weight:normal;letter-spacing:-0.201px;transform:scaleX(0.9711);transform-origin:0 0;">GEORGIA</div>
<div id="t60" class="a tx" style="left:1159.17px;top:294.30px;font-size:13.00px;line-height:13.00px;color:#55565e;font-weight:normal;letter-spacing:0.303px;transform:scaleX(1.0671);transform-origin:0 0;">03/12/2020</div>
<div id="t61" class="a tx" style="left:1364.14px;top:294.30px;font-size:13.00px;line-height:13.00px;color:#55565e;font-weight:normal;letter-spacing:0.000px;transform:scaleX(1.1000);transform-origin:0 0;">0</div>
<div id="t62" class="a tx" style="left:1159.22px;top:364.40px;font-size:13.00px;line-height:13.00px;color:#72737c;font-weight:normal;letter-spacing:-0.010px;">10:45 AM</div>
<div id="t63" class="a tx" style="left:1159.16px;top:434.40px;font-size:13.00px;line-height:13.00px;color:#72737c;font-weight:normal;letter-spacing:0.365px;transform:scaleX(1.0806);transform-origin:0 0;">Choose Value</div>
<div id="t64" class="a tx" style="left:1159.15px;top:504.40px;font-size:13.00px;line-height:13.00px;color:#72737c;font-weight:normal;letter-spacing:0.340px;transform:scaleX(1.0837);transform-origin:0 0;">Choose requested option</div>
<div class="a" style="left:938px;top:537px;width:605px;height:189px;border:1px solid #e2e3ee;border-radius:3px;background:#fff"></div>
<div id="t65" class="a tx" style="left:951.16px;top:549.60px;font-size:13.00px;line-height:13.00px;color:#76767e;font-weight:normal;letter-spacing:0.282px;transform:scaleX(1.0709);transform-origin:0 0;">Appointment Notes...</div>
<svg class="a" style="left:1530px;top:713px;" width="12" height="12" viewBox="0 0 12 12"><path d="M10.7 3.3 L3.2 10.8 M10.7 7.3 L7.2 10.8" stroke="#3a3a3a" stroke-width="1.1" stroke-dasharray="1 .6"/></svg>
<div class="a" style="left:730px;top:537.0px;width:188px;height:37.0px;background:#73aef8;border-radius:4px"></div>
<div id="t66" class="a tx" style="left:783.90px;top:548.57px;font-size:13.50px;line-height:13.50px;color:#ffffff;font-weight:normal;letter-spacing:0.202px;transform:scaleX(1.0475);transform-origin:0 0;-webkit-text-stroke:.45px #fff">Client Notes</div>
<div class="a" style="left:730px;top:590.5px;width:188px;height:34.5px;background:#73aef8;border-radius:0 0 4px 4px"></div>
<div id="t67" class="a tx" style="left:784.45px;top:600.57px;font-size:13.50px;line-height:13.50px;color:#ffffff;font-weight:normal;letter-spacing:0.217px;transform:scaleX(1.0524);transform-origin:0 0;-webkit-text-stroke:.45px #fff">Clinic Notes</div>
<div class="a" style="left:730px;top:638.0px;width:188px;height:38.0px;background:#73aef8;border-radius:4px"></div>
<div id="t68" class="a tx" style="left:785.63px;top:651.37px;font-size:13.50px;line-height:13.50px;color:#ffffff;font-weight:normal;letter-spacing:0.345px;transform:scaleX(1.0738);transform-origin:0 0;-webkit-text-stroke:.45px #fff">Treatments</div>
<div class="a" style="left:730px;top:689.0px;width:188px;height:37.6px;background:#73aef8;border-radius:4px"></div>
<div id="t69" class="a tx" style="left:798.44px;top:702.07px;font-size:13.50px;line-height:13.50px;color:#ffffff;font-weight:normal;letter-spacing:0.297px;transform:scaleX(1.0621);transform-origin:0 0;-webkit-text-stroke:.45px #fff">Deposit</div>
<div class="a" style="left:727px;top:590px;width:201px;height:1px;background:#333a44"></div>
<svg class="a" style="left:870px;top:555px;" width="35" height="37" viewBox="0 0 35 37"><path d="M13.6 22.4 L13.6 9 C13.6 7.2 16.3 7.2 16.3 9 L16.3 13.8 C16.3 12.1 19.2 12.1 19.2 13.8 L19.2 14.6 C19.2 12.9 22.2 12.9 22.2 14.6 L22.2 15.6 C22.2 13.9 25.3 13.9 25.3 15.6 L25.3 24.6 C25.3 28.4 22.6 30.5 18.6 30.5 C15.6 30.5 13.6 29.2 11.8 26.9 L8.6 22.5 C7.7 21.2 9.3 19.7 10.7 20.5 Z" fill="#fff" stroke="#111" stroke-width="1.15" stroke-linejoin="round"/><path d="M16.3 13.8 V17.6 M19.2 14.6 V17.6 M22.2 15.6 V17.6" stroke="#111" stroke-width="1.1"/></svg>
<div class="a" style="left:100.0px;top:774px;width:141.7px;height:36.5px;background:#1ec8b4;border-radius:4px"></div>
<div id="t70" class="a tx" style="left:113.67px;top:786.47px;font-size:13.50px;line-height:13.50px;color:#ffffff;font-weight:normal;letter-spacing:0.116px;transform:scaleX(1.0241);transform-origin:0 0;-webkit-text-stroke:.45px #fff">Remove From List</div>
<div class="a" style="left:255.0px;top:774px;width:87.0px;height:36.5px;background:#1ec8b4;border-radius:4px"></div>
<div id="t71" class="a tx" style="left:267.96px;top:786.47px;font-size:13.50px;line-height:13.50px;color:#ffffff;font-weight:normal;letter-spacing:0.137px;transform:scaleX(1.0335);transform-origin:0 0;-webkit-text-stroke:.45px #fff">Clear List</div>
<div class="a" style="left:1319.8px;top:774px;width:55.1px;height:36.5px;background:#1ec8b4;border-radius:4px"></div>
<div id="t72" class="a tx" style="left:1333.52px;top:786.47px;font-size:13.50px;line-height:13.50px;color:#ffffff;font-weight:normal;letter-spacing:0.642px;transform:scaleX(1.0871);transform-origin:0 0;-webkit-text-stroke:.45px #fff">Add</div>
<div class="a" style="left:1387.8px;top:774px;width:67.2px;height:36.5px;background:#272a3d;border-radius:4px"></div>
<div id="t73" class="a tx" style="left:1400.76px;top:786.47px;font-size:13.50px;line-height:13.50px;color:#ffffff;font-weight:normal;letter-spacing:0.174px;transform:scaleX(1.0353);transform-origin:0 0;-webkit-text-stroke:.45px #fff">Drinks</div>
<div class="a" style="left:1468.0px;top:774px;width:94.8px;height:36.5px;background:#272a3d;border-radius:4px"></div>
<div id="t74" class="a tx" style="left:1480.96px;top:786.47px;font-size:13.50px;line-height:13.50px;color:#ffffff;font-weight:normal;letter-spacing:0.188px;transform:scaleX(1.0362);transform-origin:0 0;-webkit-text-stroke:.45px #fff">Resources</div>
</body></html>
